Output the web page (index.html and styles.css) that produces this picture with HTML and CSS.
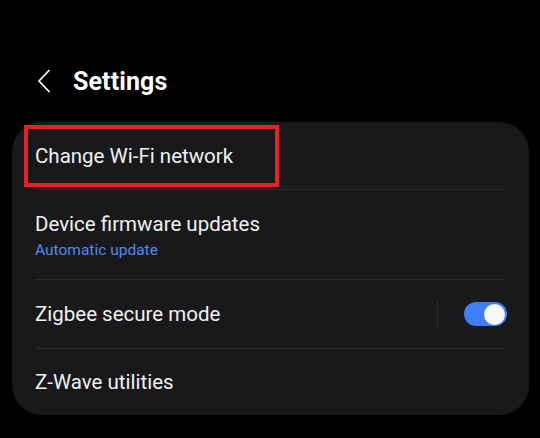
FILE: index.html
```html
<!DOCTYPE html>
<html>
<head>
<meta charset="utf-8">
<link rel="stylesheet" href="styles.css">
</head>
<body>
<div class="screen">
  <header class="topbar">
    <svg class="back" width="14" height="24" viewBox="0 0 14 24"><path d="M12 1.5 L2 12 L12 22.5" fill="none" stroke="#fff" stroke-width="1.8" stroke-linecap="round" stroke-linejoin="round"/></svg>
    <h1 class="title">Settings</h1>
  </header>
  <section class="card">
    <div class="row row-first">
      <span class="label">Change Wi-Fi network</span>
      <span class="highlight"></span>
    </div>
    <div class="row row-tall">
      <div class="stack">
        <span class="label">Device firmware updates</span>
        <span class="sub">Automatic update</span>
      </div>
    </div>
    <div class="row">
      <span class="label">Zigbee secure mode</span>
      <div class="control">
        <span class="vsep"></span>
        <span class="toggle"><span class="knob"></span></span>
      </div>
    </div>
    <div class="row row-last">
      <span class="label">Z-Wave utilities</span>
    </div>
  </section>
</div>
</body>
</html>
```

FILE: styles.css
```css
html, body {
  margin: 0;
  padding: 0;
  background: #000;
}
body {
  width: 540px;
  height: 438px;
  overflow: hidden;
  font-family: Roboto, "Liberation Sans", sans-serif;
  color: #f2f2f2;
}
.screen {
  padding: 0 11px 0 12px;
}
.topbar {
  display: flex;
  align-items: center;
  height: 122px;
  padding-left: 25px;
  box-sizing: border-box;
  padding-top: 40px;
}
.back {
  display: block;
  margin-right: 22px;
}
.title {
  margin: 0;
  font-size: 25px;
  font-weight: 700;
  color: #fff;
  letter-spacing: 0.1px;
}
.card {
  background: #19191b;
  border-radius: 30px;
  padding: 0 24px 0 23px;
  height: 293px;
  box-sizing: border-box;
}
.row {
  position: relative;
  display: flex;
  align-items: center;
  justify-content: space-between;
  height: 68px;
  border-bottom: 1px solid #2a2a2d;
}
.row-first {
  height: 67px;
}
.row-tall {
  height: 89px;
}
.row-last {
  border-bottom: none;
  height: 68px;
  padding-bottom: 2px;
  box-sizing: border-box;
}
.label {
  font-size: 20.5px;
  color: #f0f0f0;
}
.stack {
  display: flex;
  flex-direction: column;
  gap: 5px;
  padding-top: 1px;
}
.sub {
  font-size: 15.5px;
  color: #4f8bf0;
}
.highlight {
  position: absolute;
  left: -11px;
  top: 3px;
  width: 255px;
  height: 62px;
  box-sizing: border-box;
  border: 4px solid #e8202c;
}
.control {
  display: flex;
  align-items: center;
  gap: 26px;
}
.vsep {
  display: block;
  width: 1px;
  height: 27px;
  background: #2e2e31;
}
.toggle {
  position: relative;
  display: block;
  width: 43px;
  height: 24px;
  border-radius: 12px;
  background: #3f7ef5;
  margin-right: -2px;
}
.knob {
  position: absolute;
  right: 2px;
  top: 1.5px;
  width: 21px;
  height: 21px;
  border-radius: 50%;
  background: #f8f8ff;
}
```
